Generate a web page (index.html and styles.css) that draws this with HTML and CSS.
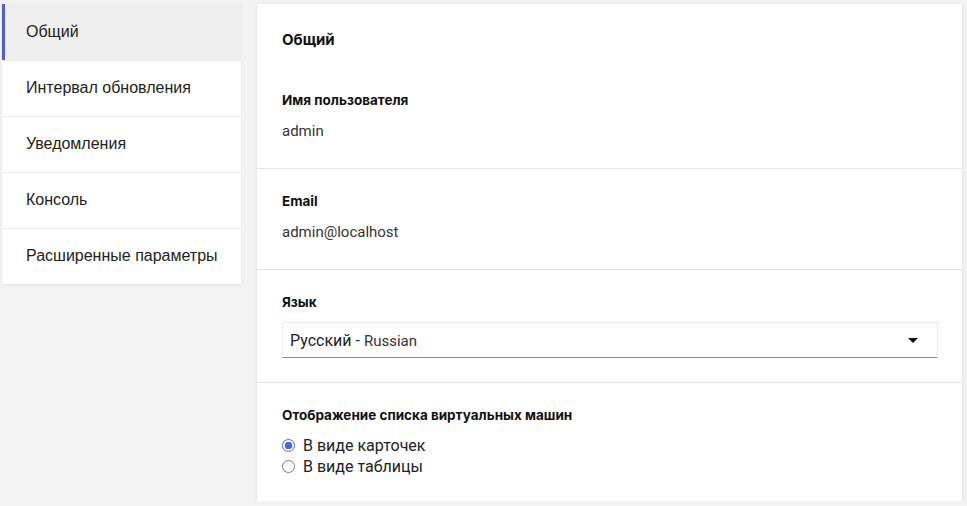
FILE: index.html
```html
<!DOCTYPE html>
<html lang="ru">
<head>
<meta charset="utf-8">
<title>Настройки</title>
<link rel="stylesheet" href="styles.css">
</head>
<body>
<div class="layout">
  <nav class="nav">
    <div class="nav-item active">Общий</div>
    <div class="nav-item">Интервал обновления</div>
    <div class="nav-item">Уведомления</div>
    <div class="nav-item">Консоль</div>
    <div class="nav-item">Расширенные параметры</div>
  </nav>
  <main class="panel">
    <section class="section first">
      <h2 class="title">Общий</h2>
      <div class="label">Имя пользователя</div>
      <div class="value">admin</div>
    </section>
    <section class="section">
      <div class="label">Email</div>
      <div class="value">admin@localhost</div>
    </section>
    <section class="section">
      <div class="label">Язык</div>
      <div class="select">
        <span class="select-text">Русский - <span class="select-sub">Russian</span></span>
        <span class="caret"></span>
      </div>
    </section>
    <section class="section last">
      <div class="label">Отображение списка виртуальных машин</div>
      <label class="radio-row"><span class="radio checked"></span>В виде карточек</label>
      <label class="radio-row"><span class="radio"></span>В виде таблицы</label>
    </section>
  </main>
</div>
</body>
</html>
```

FILE: styles.css
```css
* { box-sizing: border-box; }
html, body { margin: 0; padding: 0; }
body {
  background: #f3f3f3;
  font-family: Roboto, "Liberation Sans", sans-serif;
  color: #222;
}
.layout {
  display: flex;
  align-items: flex-start;
  gap: 16px;
  padding: 4px 5px 0 2px;
}
.nav {
  width: 239px;
  background: #fff;
  box-shadow: 0 1px 2px rgba(0,0,0,0.08);
  display: flex;
  flex-direction: column;
}
.nav-item {
  height: 56px;
  display: flex;
  align-items: center;
  padding-left: 24px;
  padding-bottom: 1px;
  font-family: "Liberation Sans", Arial, sans-serif;
  font-size: 16px;
  color: #222;
  border-top: 1px solid #ebebeb;
}
.nav-item:first-child { border-top: none; }
.nav-item.active {
  background: #efefef;
  border-left: 3px solid #4a5fd0;
  padding-left: 21px;
}
.panel {
  width: 705px;
  background: #fff;
  box-shadow: 0 1px 3px rgba(0,0,0,0.12);
}
.section {
  padding: 24px 24px 24px 25px;
  border-top: 1px solid #e3e3e3;
}
.section.first {
  border-top: none;
  padding-top: 28px;
}
.title {
  margin: 0 0 44px;
  font-family: Inter, Roboto, sans-serif;
  font-size: 15px;
  line-height: 16px;
  font-weight: 700;
  color: #111;
}
.label {
  font-family: Inter, Roboto, sans-serif;
  font-size: 13.5px;
  line-height: 16px;
  font-weight: 700;
  color: #111;
  margin-bottom: 12px;
}
.value {
  font-size: 15px;
  line-height: 22px;
  color: #333;
  margin-bottom: 2px;
}
.select {
  height: 36px;
  display: flex;
  align-items: center;
  justify-content: space-between;
  padding: 0 19px 0 7px;
  border: 1px solid #ececec;
  border-bottom: 1px solid #8c8c8c;
  font-size: 16px;
  color: #222;
}
.select-sub { font-size: 15px; color: #333; }
.caret {
  width: 0;
  height: 0;
  border-left: 5px solid transparent;
  border-right: 5px solid transparent;
  border-top: 5px solid #111;
}
.last { padding-bottom: 24px; }
.radio-row {
  display: flex;
  align-items: center;
  height: 21px;
  font-size: 16px;
  color: #222;
}
.radio {
  width: 13px;
  height: 13px;
  border-radius: 50%;
  border: 1px solid #767676;
  margin-right: 8px;
  flex: none;
  background: #fff;
}
.radio.checked {
  border-color: #4a63e7;
  background: radial-gradient(circle, #4a63e7 0 3.5px, #fff 4px);
}
```
